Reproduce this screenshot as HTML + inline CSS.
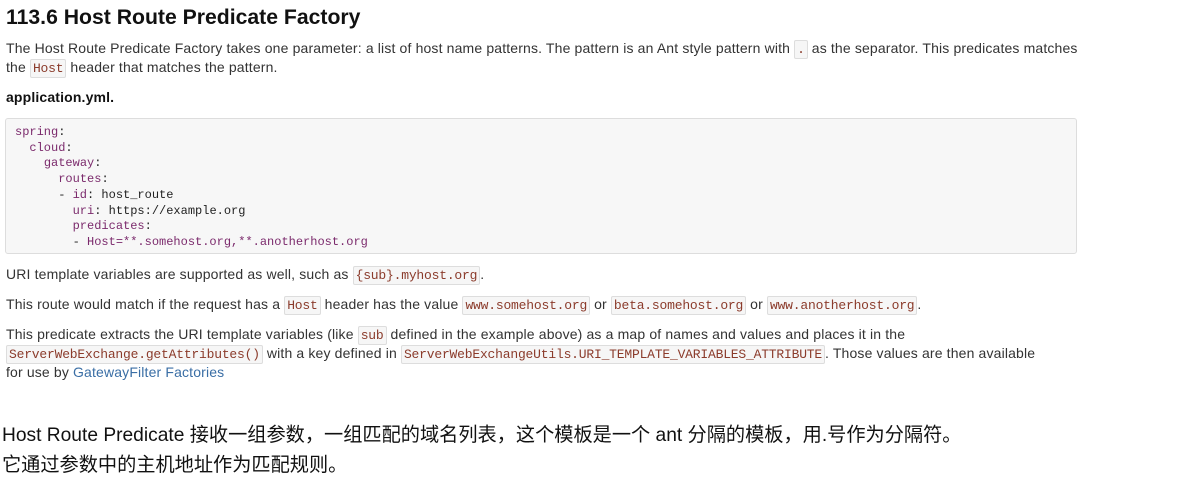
<!DOCTYPE html>
<html><head><meta charset="utf-8"><style>
body{margin:0;width:1186px;height:482px;background:#fff;font-family:"Liberation Sans",Arial,sans-serif;color:#333;position:relative;overflow:hidden}
.a{position:absolute;white-space:nowrap}
h2{position:absolute;left:6px;top:6px;margin:0;font-size:21.2px;font-weight:bold;color:#111}
.p{font-size:14px;color:#333;letter-spacing:0.15px}
code{font-family:"Liberation Mono",monospace;font-size:13px;letter-spacing:-0.2px;color:#8b3b2b;background:#f6f6f6;border:1px solid #ddd;border-radius:2px;padding:1px 2px}
pre{position:absolute;left:5px;top:118px;width:1052px;height:118px;margin:0;padding:6px 9px 10px;background:#f7f7f7;border:1px solid #ddd;border-radius:3px;font-family:"Liberation Mono",monospace;font-size:12px;line-height:15.7px;color:#222}
.k{color:#7b2a6c}
.cn{font-size:19.2px;color:#111;font-family:"Liberation Sans","Noto Sans CJK SC",sans-serif}
a{color:#3a6ea5;text-decoration:none}
</style></head><body>
<h2>113.6 Host Route Predicate Factory</h2>
<div class="a p" style="left:6px;top:40px">The Host Route Predicate Factory takes one parameter: a list of host name patterns. The pattern is an Ant style pattern with <code>.</code> as the separator. This predicates matches</div>
<div class="a p" style="left:6px;top:59px">the <code>Host</code> header that matches the pattern.</div>
<div class="a p" style="left:6px;top:89px;font-weight:bold;color:#111">application.yml.</div>
<pre><span class="k">spring</span>:
  <span class="k">cloud</span>:
    <span class="k">gateway</span>:
      <span class="k">routes</span>:
      - <span class="k">id</span>: host_route
        <span class="k">uri</span>: https://example.org
        <span class="k">predicates</span>:
        - <span class="k">Host=**.somehost.org,**.anotherhost.org</span></pre>
<div class="a p" style="left:6px;top:266px">URI template variables are supported as well, such as <code>{sub}.myhost.org</code>.</div>
<div class="a p" style="left:6px;top:296px">This route would match if the request has a <code>Host</code> header has the value <code>www.somehost.org</code> or <code>beta.somehost.org</code> or <code>www.anotherhost.org</code>.</div>
<div class="a p" style="left:6px;top:326px">This predicate extracts the URI template variables (like <code>sub</code> defined in the example above) as a map of names and values and places it in the</div>
<div class="a p" style="left:6px;top:345px"><code>ServerWebExchange.getAttributes()</code> with a key defined in <code>ServerWebExchangeUtils.URI_TEMPLATE_VARIABLES_ATTRIBUTE</code>. Those values are then available</div>
<div class="a p" style="left:6px;top:364px">for use by <a>GatewayFilter Factories</a></div>
<div class="a cn" style="left:2px;top:419px">Host Route Predicate 接收一组参数，一组匹配的域名列表，这个模板是一个 ant 分隔的模板，用.号作为分隔符。</div>
<div class="a cn" style="left:2px;top:449px">它通过参数中的主机地址作为匹配规则。</div>
</body></html>
